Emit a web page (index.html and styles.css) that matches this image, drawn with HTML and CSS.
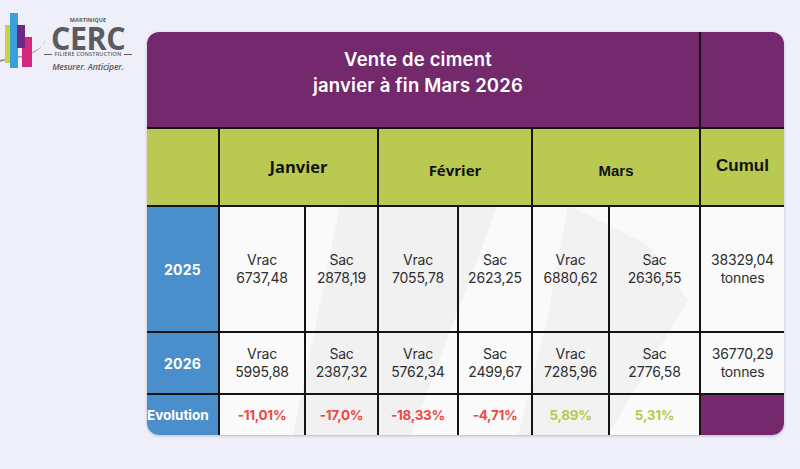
FILE: index.html
```html
<!DOCTYPE html>
<html lang="fr">
<head>
<meta charset="utf-8">
<title>Vente de ciment</title>
<link rel="stylesheet" href="styles.css">
</head>
<body>
<div class="page">
  <div class="logo">
    <svg class="logo-mark" width="46" height="62" viewBox="0 0 46 62">
      <path d="M0 50 C14 46 30 47 42 36 C44 34 45 32 45 30 C44 37 34 44 22 47 C12 49 5 50 0 52 Z" fill="#8e8e90"/>
      <rect x="5" y="15" width="7" height="38" fill="#c5d63d"/>
      <rect x="10" y="3" width="8" height="55" fill="#3a9fdc"/>
      <rect x="22" y="27" width="10" height="30" fill="#d2287e"/>
      <rect x="17" y="15" width="8" height="23" fill="#6b2a84"/>
    </svg>
    <div class="logo-text">
      <span class="logo-top">MARTINIQUE</span>
      <span class="logo-name">CERC</span>
      <span class="logo-sub"><i class="dash"></i>FILIÈRE CONSTRUCTION<i class="dash"></i></span>
      <span class="logo-tag">Mesurer. Anticiper.</span>
    </div>
  </div>

  <div class="card">
    <div class="grid">
      <svg class="watermark" width="566" height="230" viewBox="0 0 566 230" aria-hidden="true">
        <polygon points="75,230 122,0 280,0 193,230" fill="#000" opacity="0.035"/>
        <polygon points="300,230 330,110 350,0 430,40 470,95 390,230" fill="#000" opacity="0.03"/>
      </svg>

      <div class="c title"><span>Vente de ciment</span><span>janvier à fin Mars 2026</span></div>
      <div class="c title-side bl"></div>

      <div class="c green bt"></div>
      <div class="c green bt bl span2 month m-jan">Janvier</div>
      <div class="c green bt bl span2 month m-feb">Février</div>
      <div class="c green bt bl span2 month m-mar">Mars</div>
      <div class="c green bt bl month m-cum">Cumul</div>

      <div class="c label bt">2025</div>
      <div class="c val bt bl"><span>Vrac</span><span>6737,48</span></div>
      <div class="c val bt bl"><span>Sac</span><span>2878,19</span></div>
      <div class="c val bt bl"><span>Vrac</span><span>7055,78</span></div>
      <div class="c val bt bl"><span>Sac</span><span>2623,25</span></div>
      <div class="c val bt bl"><span>Vrac</span><span>6880,62</span></div>
      <div class="c val bt bl"><span>Sac</span><span>2636,55</span></div>
      <div class="c val bt bl"><span>38329,04</span><span>tonnes</span></div>

      <div class="c label bt">2026</div>
      <div class="c val bt bl"><span>Vrac</span><span>5995,88</span></div>
      <div class="c val bt bl"><span>Sac</span><span>2387,32</span></div>
      <div class="c val bt bl"><span>Vrac</span><span>5762,34</span></div>
      <div class="c val bt bl"><span>Sac</span><span>2499,67</span></div>
      <div class="c val bt bl"><span>Vrac</span><span>7285,96</span></div>
      <div class="c val bt bl"><span>Sac</span><span>2776,58</span></div>
      <div class="c val bt bl"><span>36770,29</span><span>tonnes</span></div>

      <div class="c label label-evo bt">Evolution</div>
      <div class="c evo neg bt bl">-11,01%</div>
      <div class="c evo neg bt bl">-17,0%</div>
      <div class="c evo neg bt bl">-18,33%</div>
      <div class="c evo neg bt bl">-4,71%</div>
      <div class="c evo pos bt bl">5,89%</div>
      <div class="c evo pos bt bl">5,31%</div>
      <div class="c evo-end bt bl"></div>
    </div>
  </div>
</div>
</body>
</html>
```

FILE: styles.css
```css
* { box-sizing: border-box; }
html, body { margin: 0; padding: 0; }
body {
  background: #eeeff8;
  width: 800px;
  height: 469px;
  overflow: hidden;
  font-family: "Inter", "Liberation Sans", sans-serif;
}
.page {
  display: flex;
  align-items: flex-start;
}
.logo {
  width: 147px;
  display: flex;
  align-items: flex-start;
  padding-top: 10px;
}
.logo-mark { flex: none; }
.logo-text {
  display: flex;
  flex-direction: column;
  align-items: center;
  width: 80px;
  margin-left: 2px;
  margin-top: 7px;
  color: #5b5b5d;
  font-family: "Open Sans", "DejaVu Sans", sans-serif;
}
.logo-top {
  font-size: 5.5px;
  font-weight: 700;
  letter-spacing: 0.1px;
  line-height: 6px;
}
.logo-name {
  font-size: 32px;
  font-weight: 700;
  line-height: 30px;
  letter-spacing: -0.4px;
  transform: scaleX(0.95);
}
.logo-sub {
  display: flex;
  align-items: center;
  margin-top: -3px;
  font-size: 5.5px;
  font-weight: 600;
  line-height: 8px;
  letter-spacing: 0.2px;
  white-space: nowrap;
}
.dash {
  display: inline-block;
  width: 8px;
  height: 1px;
  background: #5b5b5d;
  margin: 0 2px;
}
.logo-tag {
  margin-top: 3px;
  font-size: 8.5px;
  font-style: italic;
  font-weight: 600;
  line-height: 12px;
  letter-spacing: -0.1px;
}

.card {
  margin-top: 32px;
  border-radius: 12px;
  box-shadow: 0 1px 3px rgba(40, 30, 60, 0.25);
}
.grid {
  position: relative;
  display: grid;
  grid-template-columns: 71px 86px 73px 80px 74px 77px 91px 85px;
  grid-template-rows: 95px 78px 126px 62px 42px;
  border-radius: 12px;
  overflow: hidden;
  background: #fafafa;
}
.c {
  position: relative;
  z-index: 1;
  display: flex;
  align-items: center;
  justify-content: center;
  text-align: center;
  min-width: 0;
}
.bt { border-top: 2px solid #141414; }
.bl { border-left: 2px solid #141414; }
.span2 { grid-column: span 2; }

.title {
  grid-column: 1 / 8;
  background: #74296d;
  color: #fff;
  flex-direction: column;
  justify-content: flex-start;
  padding-top: 14px;
  padding-right: 10px;
  font-family: "Inter", "Liberation Sans", sans-serif;
  font-weight: 600;
  font-size: 18.5px;
  line-height: 26px;
  letter-spacing: 0.2px;
}
.title-side { background: #74296d; }

.green { background: #b9c951; color: #111; }
.month { font-weight: 700; }
.m-jan { font-family: "Open Sans", sans-serif; font-size: 16.5px; padding-bottom: 2px; }
.m-feb { font-family: "Open Sans", sans-serif; font-size: 15px; padding-top: 5px; }
.m-mar { font-family: "Liberation Sans", sans-serif; font-size: 15px; padding-top: 6px; }
.m-cum { font-family: "Liberation Sans", sans-serif; font-size: 17px; align-items: flex-start; padding-top: 27px; }

.label {
  background: #4a8fcb;
  color: #fff;
  font-weight: 700;
  font-size: 14px;
  letter-spacing: 0.2px;
}
.label-evo {
  font-size: 13.5px;
  letter-spacing: 0;
  justify-content: flex-start;
}

.val {
  flex-direction: column;
  color: #2f2f2f;
  font-size: 14px;
  line-height: 18.5px;
  letter-spacing: -0.2px;
}
.evo {
  font-weight: 700;
  font-size: 13.5px;
  letter-spacing: -0.3px;
}
.neg { color: #ea4a45; }
.pos { color: #b7c94f; }
.evo-end { background: #74296d; }

.watermark {
  position: absolute;
  left: 71px;
  top: 173px;
  z-index: 0;
  pointer-events: none;
}
```
